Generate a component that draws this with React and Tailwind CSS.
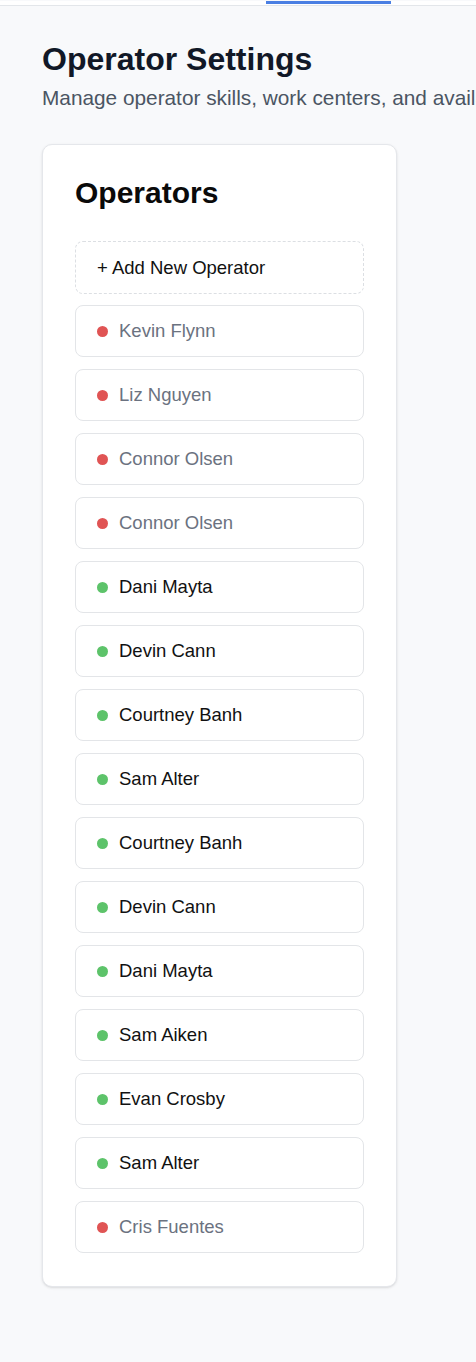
import React from 'react';

const operators = [
    { name: 'Kevin Flynn', active: false },
    { name: 'Liz Nguyen', active: false },
    { name: 'Connor Olsen', active: false },
    { name: 'Connor Olsen', active: false },
    { name: 'Dani Mayta', active: true },
    { name: 'Devin Cann', active: true },
    { name: 'Courtney Banh', active: true },
    { name: 'Sam Alter', active: true },
    { name: 'Courtney Banh', active: true },
    { name: 'Devin Cann', active: true },
    { name: 'Dani Mayta', active: true },
    { name: 'Sam Aiken', active: true },
    { name: 'Evan Crosby', active: true },
    { name: 'Sam Alter', active: true },
    { name: 'Cris Fuentes', active: false },
];

const App = () => {
    return (
        <div className="min-h-screen bg-[#f8f9fb] font-['Liberation_Sans',Arial,sans-serif] overflow-hidden">
            {/* Tab bar (cropped) */}
            <div className="h-[5px] bg-white border-b border-[#e3e6ea]">
                <div className="ml-[266px] mt-[1px] w-[125px] h-[3px] bg-[#4a7fe3]" />
            </div>

            <div className="pl-[42px] pt-[33px] pb-10">
                {/* Header */}
                <h1 className="text-[32px] leading-[40px] font-bold text-[#111827] whitespace-nowrap">Operator Settings</h1>
                <p className="mt-[5px] text-[20.8px] leading-[28px] text-[#4b5563] whitespace-nowrap">
                    Manage operator skills, work centers, and availability
                </p>

                {/* Operators card */}
                <div className="mt-[32px] w-[355px] bg-white border border-[#e5e7eb] rounded-[10px] shadow-sm px-[32px] pt-[30px] pb-[33px]">
                    <h2 className="text-[30px] leading-[36px] font-bold text-[#0a0a0a]">Operators</h2>

                    <div className="mt-[30px] flex flex-col gap-[12px]">
                        <button className="h-[53px] -mb-[1px] w-full flex items-center px-[21px] border border-dashed border-[#dcdfe3] rounded-lg text-[18.5px] text-[#111] text-left">
                            + Add New Operator
                        </button>
                        {operators.map((op, i) => (
                            <div
                                key={i}
                                className="h-[52px] w-full flex items-center gap-[11px] px-[21px] border border-[#e3e5e8] rounded-lg"
                            >
                                <div className={`w-[11px] h-[11px] rounded-full ${op.active ? 'bg-[#5dc36a]' : 'bg-[#e05454]'}`} />
                                <span className={`text-[18.5px] ${op.active ? 'text-[#111]' : 'text-[#6b7280]'}`}>{op.name}</span>
                            </div>
                        ))}
                    </div>
                </div>
            </div>
        </div>
    );
};

export default App;
